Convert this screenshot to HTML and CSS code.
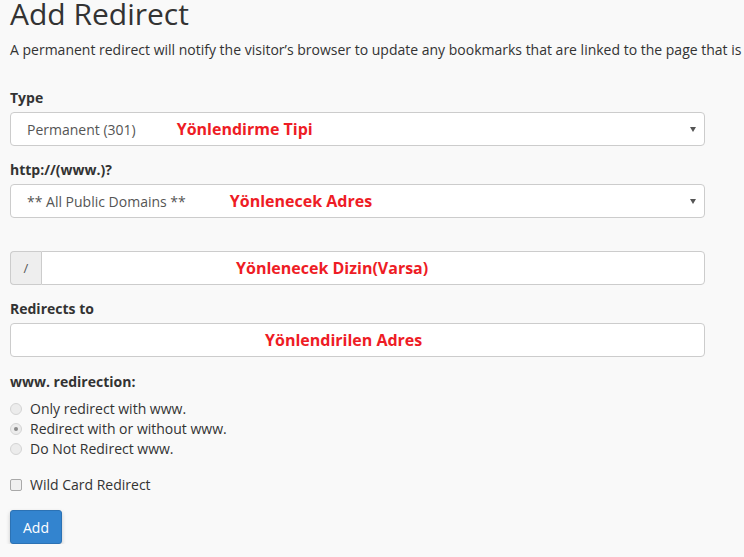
FILE: index.html
```html
<!DOCTYPE html>
<html lang="en">
<head>
    <meta charset="UTF-8">
    <title>Add Redirect</title>
    <link rel="stylesheet" href="styles.css">
</head>
<body>
    <div class="page">
        <h1 class="title">Add Redirect</h1>
        <p class="lead">A permanent redirect will notify the visitor’s browser to update any bookmarks that are linked to the page that is</p>

        <form class="form">
            <div class="group">
                <label class="label">Type</label>
                <div class="control select">
                    <span class="value">Permanent (301)</span>
                    <span class="note note-type">Yönlendirme Tipi</span>
                    <span class="caret"></span>
                </div>
            </div>

            <div class="group">
                <label class="label">http://(www.)?</label>
                <div class="control select">
                    <span class="value">** All Public Domains **</span>
                    <span class="note note-domain">Yönlenecek Adres</span>
                    <span class="caret"></span>
                </div>
            </div>

            <div class="group group-path">
                <div class="input-group">
                    <span class="addon">/</span>
                    <div class="control control-join">
                        <span class="note note-path">Yönlenecek Dizin(Varsa)</span>
                    </div>
                </div>
            </div>

            <div class="group">
                <label class="label">Redirects to</label>
                <div class="control">
                    <span class="note note-target">Yönlendirilen Adres</span>
                </div>
            </div>

            <div class="group group-radios">
                <label class="label">www. redirection:</label>
                <label class="option"><input type="radio" name="www"> Only redirect with www.</label>
                <label class="option"><input type="radio" name="www" checked> Redirect with or without www.</label>
                <label class="option"><input type="radio" name="www"> Do Not Redirect www.</label>
            </div>

            <label class="option option-check"><input type="checkbox"> Wild Card Redirect</label>

            <button type="button" class="btn">Add</button>
        </form>
    </div>
</body>
</html>
```

FILE: styles.css
```css
* {
    margin: 0;
    padding: 0;
    box-sizing: border-box;
}

body {
    background-color: #f9f9f9;
    font-family: "Open Sans", "Liberation Sans", sans-serif;
    font-size: 14px;
    color: #333333;
    overflow: hidden;
}

.page {
    padding: 0 0 0 10px;
    width: 744px;
    overflow: hidden;
}

.title {
    font-size: 30px;
    font-weight: 400;
    line-height: 40px;
    margin-top: -6px;
    color: #333333;
}

.lead {
    white-space: nowrap;
    margin-top: 6px;
    line-height: 20px;
}

.form {
    width: 695px;
    margin-top: 28px;
}

.group {
    margin-bottom: 14px;
}

.label {
    display: block;
    font-weight: 700;
    line-height: 20px;
    margin-bottom: 4px;
}

.control {
    position: relative;
    display: flex;
    align-items: center;
    height: 34px;
    background-color: #ffffff;
    border: 1px solid #cccccc;
    border-radius: 4px;
    padding: 0 16px;
}

.value {
    color: #555555;
}

.note {
    color: #ee1c25;
    font-weight: 700;
    font-size: 16px;
}

.note-type {
    margin-left: 41px;
}

.note-domain {
    margin-left: 44px;
}

.note-path {
    margin-left: 178px;
}

.note-target {
    margin-left: 238px;
}

.caret {
    position: absolute;
    right: 8px;
    top: 14px;
    width: 0;
    height: 0;
    border-left: 3px solid transparent;
    border-right: 3px solid transparent;
    border-top: 5px solid #555555;
}

.group-path {
    margin-top: 33px;
}

.input-group {
    display: flex;
}

.addon {
    width: 31px;
    height: 34px;
    background-color: #eeeeee;
    border: 1px solid #cccccc;
    border-right: 0;
    border-radius: 4px 0 0 4px;
    color: #555555;
    font-size: 13px;
    display: flex;
    align-items: center;
    justify-content: center;
}

.control-join {
    flex: 1;
    border-radius: 0 4px 4px 0;
}

.group-radios {
    margin-top: 15px;
    margin-bottom: 16px;
}

.group-radios .label {
    margin-bottom: 7px;
}

.option {
    display: flex;
    align-items: center;
    height: 20px;
    line-height: 20px;
    gap: 8px;
}

.option input {
    -webkit-appearance: none;
    appearance: none;
    width: 12px;
    height: 12px;
    border: 1px solid #d4d4d4;
    background-color: #ececec;
    border-radius: 50%;
    position: relative;
}

.option input:checked::after {
    content: "";
    position: absolute;
    left: 3px;
    top: 3px;
    width: 4px;
    height: 4px;
    border-radius: 50%;
    background-color: #8a8a8a;
}

.option-check input {
    border-radius: 2px;
    width: 12px;
    height: 12px;
    border-color: #a9a9a9;
    background-color: #f0f0f0;
}

.btn {
    margin-top: 15px;
    display: block;
    width: 52px;
    height: 34px;
    background-color: #3384cf;
    border: 1px solid #2c72b4;
    border-radius: 3px;
    color: #ffffff;
    font-family: "Open Sans", "Liberation Sans", sans-serif;
    font-size: 14px;
    box-shadow: 0 2px 4px rgba(0, 0, 0, 0.2);
}
```
